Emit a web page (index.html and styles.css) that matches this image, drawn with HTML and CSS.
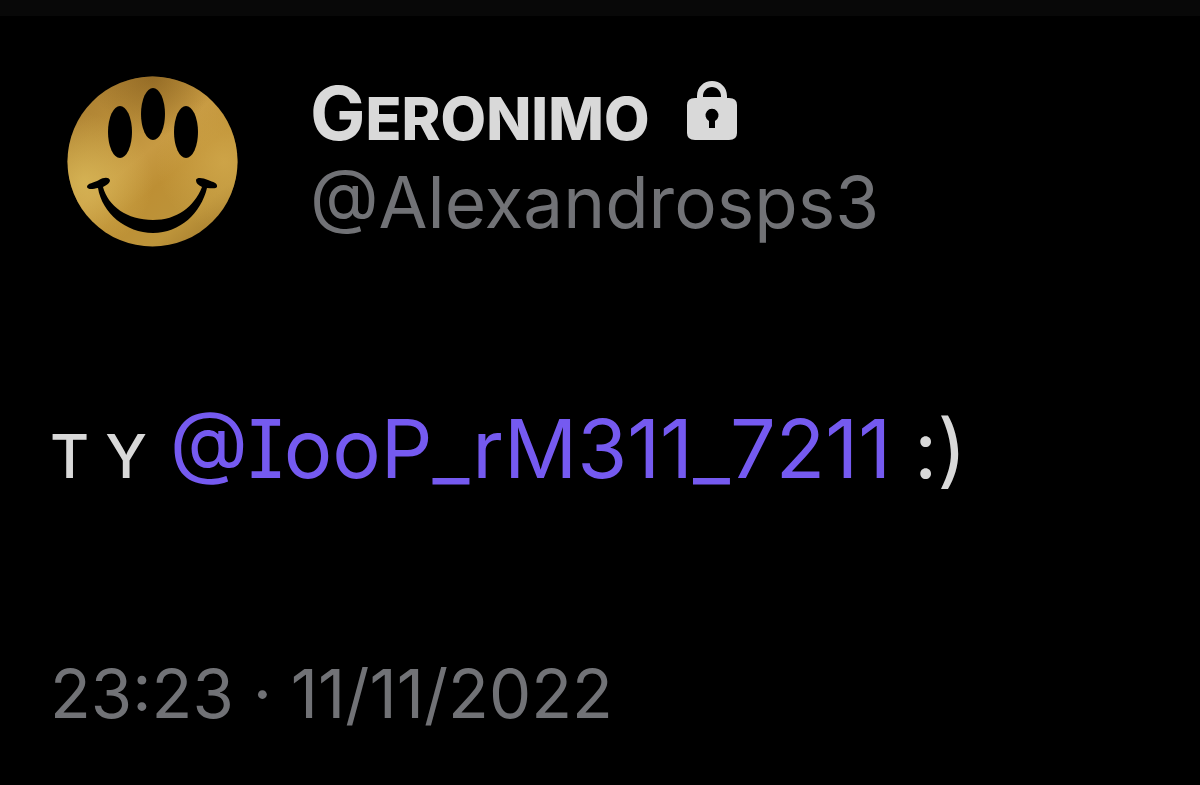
FILE: index.html
```html
<!DOCTYPE html>
<html lang="en">
<head>
<meta charset="utf-8">
<meta name="viewport" content="width=device-width, initial-scale=1">
<title>Geronimo</title>
<link rel="stylesheet" href="styles.css">
</head>
<body>
<div class="topbar"></div>
<article class="post">
  <header class="author">
    <svg class="avatar" viewBox="0 0 171 171" aria-hidden="true">
      <defs>
        <linearGradient id="gold" x1="0.1" y1="0" x2="0.9" y2="1">
          <stop offset="0" stop-color="#a87c30"/>
          <stop offset="0.25" stop-color="#b98d38"/>
          <stop offset="0.45" stop-color="#c79a42"/>
          <stop offset="0.6" stop-color="#bd8f34"/>
          <stop offset="0.8" stop-color="#bd943a"/>
          <stop offset="1" stop-color="#a0782b"/>
        </linearGradient>
        <radialGradient id="glowLeft" cx="0.1" cy="0.62" r="0.4">
          <stop offset="0" stop-color="#dcbd5c" stop-opacity="0.7"/>
          <stop offset="1" stop-color="#dcbd5c" stop-opacity="0"/>
        </radialGradient>
        <radialGradient id="glowRight" cx="0.92" cy="0.5" r="0.4">
          <stop offset="0" stop-color="#d4ab4e" stop-opacity="0.7"/>
          <stop offset="1" stop-color="#d4ab4e" stop-opacity="0"/>
        </radialGradient>
        <radialGradient id="shadeTop" cx="0.5" cy="0" r="0.35">
          <stop offset="0" stop-color="#80591c" stop-opacity="0.6"/>
          <stop offset="1" stop-color="#80591c" stop-opacity="0"/>
        </radialGradient>
      </defs>
      <circle cx="85.5" cy="85.5" r="85" fill="url(#gold)"/>
      <circle cx="85.5" cy="85.5" r="85" fill="url(#glowLeft)"/>
      <circle cx="85.5" cy="85.5" r="85" fill="url(#glowRight)"/>
      <circle cx="85.5" cy="85.5" r="85" fill="url(#shadeTop)"/>
      <ellipse cx="53" cy="56" rx="12" ry="26"/>
      <ellipse cx="86" cy="38" rx="12" ry="26"/>
      <ellipse cx="119" cy="56" rx="12" ry="26"/>
      <path d="M20 111C20 107 27 107 32 104C37 101 43 101 43 105C42 108 39 109 36 111C41 130 60 144 86 144C110 144 127 131 135 111C132 109 129 108 129 104C130 101 136 102 141 104C146 106 151 107 150 111C149 113 144 112 140 112C134 137 113 157 86 157C59 157 35 137 31 112C26 113 21 114 20 111Z"/>
    </svg>
    <div class="identity">
      <h1 class="name"><span>G<span class="name-caps">ERONIMO</span></span>
        <svg class="lock" viewBox="0 0 50 64" role="img" aria-label="Protected account">
          <path fill="#d9d9d9" fill-rule="evenodd" d="M10 17V15C10 6 17 0 25 0S40 6 40 15V17H42Q50 17 50 24V52Q50 59 42 59H8Q0 59 0 52V24Q0 17 8 17ZM16 16H34V15C34 10 30 6 25 6S16 10 16 15ZM22 40V47H28V40A6.500 6.500 0 1 0 22 40Z"/>
        </svg>
      </h1>
      <p class="handle">@Alexandrosps3</p>
    </div>
  </header>
  <p class="message"><span class="message-caps">T Y</span> <a class="mention" href="#">@IooP_rM311_7211</a> :)</p>
  <time class="date" datetime="2022-11-11T23:23">23:23 · 11/11/2022</time>
</article>
</body>
</html>
```
FILE: styles.css
```css
body {
  margin: 0;
  background: #000;
  color: #d9d9d9;
  font-family: Inter, "Liberation Sans", sans-serif;
}

.topbar {
  height: 16px;
  background: #080808;
}

.post {
  padding: 52px 50px 50px;
}

.author {
  display: flex;
  align-items: flex-end;
  gap: 72px;
  padding-left: 17px;
}

.avatar {
  flex: none;
  width: 171px;
  height: 171px;
}

.name,
.handle,
.message {
  margin: 0;
}

.name {
  display: flex;
  align-items: center;
  gap: 38px;
  font-size: 74px;
  line-height: 90px;
  font-weight: 700;
}

.name-caps {
  font-size: 59px;
  line-height: 1;
  font-weight: 800;
}

.lock {
  width: 50px;
  height: 64px;
}

.handle {
  color: #717276;
  font-size: 71px;
  line-height: 89px;
}

.message {
  margin-top: 152px;
  font-size: 81px;
  line-height: 100px;
}

.message-caps {
  font-size: 60px;
  line-height: 1;
  font-weight: 500;
}

.mention {
  color: #755af0;
  text-decoration: none;
  font-feature-settings: "cv08";
}

.date {
  display: block;
  margin-top: 155px;
  color: #717276;
  font-size: 67px;
  line-height: 80px;
}
```
